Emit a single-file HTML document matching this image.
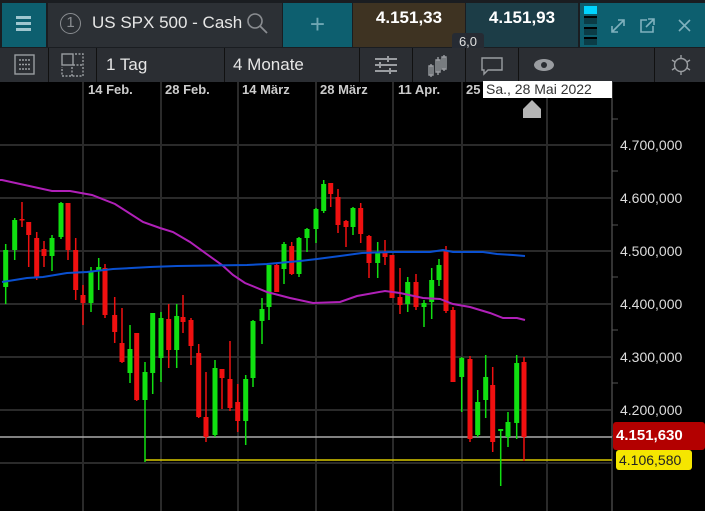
<!DOCTYPE html>
<html><head><meta charset="utf-8"><style>
*{margin:0;padding:0;box-sizing:border-box}
body{width:705px;height:511px;background:#000;overflow:hidden;font-family:"Liberation Sans",sans-serif;position:relative}
.a{position:absolute}
</style></head><body>
<div class="a" style="left:0;top:0;width:705px;height:48px;background:#1a1d21"></div>
<div class="a" style="left:2px;top:3px;width:44px;height:44px;background:#0d5f6f"></div>
<div class="a" style="left:16px;top:16px;width:15px;height:3px;background:#9fc6cf;box-shadow:0 6px 0 #9fc6cf,0 12px 0 #9fc6cf"></div>
<div class="a" style="left:48px;top:3px;width:234px;height:44px;background:#2c3035"></div>
<div class="a" style="left:60px;top:13px;width:21px;height:21px;border:1.5px solid #8a8d91;border-radius:50%;color:#8a8d91;font-size:15px;text-align:center;line-height:18px">1</div>
<div class="a" style="left:92px;top:13px;color:#e6e6e6;font-size:17px">US SPX 500 - Cash</div>
<svg class="a" style="left:246px;top:12px" width="24" height="24"><circle cx="9" cy="9" r="7" fill="none" stroke="#8a8d91" stroke-width="1.6"/><line x1="14" y1="14" x2="21" y2="21" stroke="#8a8d91" stroke-width="1.8"/></svg>
<div class="a" style="left:283px;top:3px;width:69px;height:44px;background:#0d5f6f;color:#6fa7b3;font-size:26px;text-align:center;line-height:42px;font-weight:300">+</div>
<div class="a" style="left:353px;top:3px;width:112px;height:44px;background:#3e3322;color:#fff;font-weight:bold;font-size:17px;text-align:center;line-height:30px">4.151,33</div>
<div class="a" style="left:466px;top:3px;width:112px;height:44px;background:#1c3d47;color:#fff;font-weight:bold;font-size:17px;text-align:center;line-height:30px">4.151,93</div>
<div class="a" style="left:580px;top:3px;width:125px;height:44px;background:#0d5f6f"></div>
<div class="a" style="left:584px;top:6px;width:13px;height:8px;background:#00d4ff"></div>
<div class="a" style="left:584px;top:16px;width:13px;height:8px;background:#0b3c46;border-top:2px solid #000"></div>
<div class="a" style="left:584px;top:27px;width:13px;height:8px;background:#0b3c46;border-top:2px solid #000"></div>
<div class="a" style="left:584px;top:37px;width:13px;height:8px;background:#0b3c46;border-top:2px solid #000"></div>
<svg class="a" style="left:610px;top:15px" width="90" height="20" fill="none" stroke="#7fb1bd" stroke-width="1.6"><path d="M2 17L14 5M8 5h6v6M2 11v6h6"/><path d="M37 5h-6v12h12v-6M38 4h6v6M44 4l-8 8"/><path d="M69 5l11 11M80 5L69 16"/></svg>
<div class="a" style="left:452px;top:33px;width:32px;height:16px;background:#262b33;border-radius:3px 3px 0 0;color:#e0e0e0;font-size:13px;text-align:center;line-height:17px">6,0</div>
<div class="a" style="left:0;top:48px;width:705px;height:34px;background:#2b2e33"></div>
<div class="a" style="left:48px;top:48px;width:1px;height:34px;background:#111"></div>
<div class="a" style="left:96px;top:48px;width:1px;height:34px;background:#111"></div>
<div class="a" style="left:224px;top:48px;width:1px;height:34px;background:#111"></div>
<div class="a" style="left:359px;top:48px;width:1px;height:34px;background:#111"></div>
<div class="a" style="left:412px;top:48px;width:1px;height:34px;background:#111"></div>
<div class="a" style="left:465px;top:48px;width:1px;height:34px;background:#111"></div>
<div class="a" style="left:518px;top:48px;width:1px;height:34px;background:#111"></div>
<div class="a" style="left:654px;top:48px;width:1px;height:34px;background:#111"></div>
<div class="a" style="left:106px;top:55px;color:#e6e6e6;font-size:17px">1 Tag</div>
<div class="a" style="left:233px;top:55px;color:#e6e6e6;font-size:17px">4 Monate</div>
<svg class="a" style="left:0;top:48px" width="705" height="34" fill="none" stroke="#9a9da1" stroke-width="1.4">
<rect x="15" y="7" width="19" height="19"/><path d="M19 12h11M19 16.5h11M19 21h11" stroke-dasharray="2 1"/>
<rect x="62" y="6" width="11" height="11"/><path d="M75 6h8v22h-21v-9M73 17h10M72 19v9" stroke-dasharray="2 1.5"/>
<path d="M375 11h22M375 17h22M375 23h22" stroke-width="2"/><path d="M388 8v6M380 14v6M390 20v6" stroke-width="2"/>
<path d="M429 18h4v9h-4zM436 12h4v12h-4zM442 9h4v12h-4zM431 16v13M438 9v18M444 7v16"/>
<path d="M482 10h20v12h-14l-4 4v-4h-2z"/>
<ellipse cx="544" cy="17" rx="10" ry="6" fill="#9a9da1" stroke="none"/><circle cx="544" cy="17" r="3" fill="#2b2e33" stroke="none"/>
<circle cx="681" cy="17" r="6.5"/><path d="M681 7v4M681 23v4M672 12l3 2M690 12l-3 2M672 22l3-2M690 22l-3-2"/>
</svg>
<div class="a" style="left:0;top:82px;width:705px;height:16px;background:#000"></div>
<div class="a" style="top:82px;left:88px;color:#ccc;font-size:13px;font-weight:bold">14 Feb.</div>
<div class="a" style="top:82px;left:165px;color:#ccc;font-size:13px;font-weight:bold">28 Feb.</div>
<div class="a" style="top:82px;left:242px;color:#ccc;font-size:13px;font-weight:bold">14 März</div>
<div class="a" style="top:82px;left:320px;color:#ccc;font-size:13px;font-weight:bold">28 März</div>
<div class="a" style="top:82px;left:398px;color:#ccc;font-size:13px;font-weight:bold">11 Apr.</div>
<div class="a" style="top:82px;left:466px;color:#ccc;font-size:13px;font-weight:bold">25</div>
<svg class="a" style="left:0;top:82px" width="705" height="429">
<g stroke="#2a2a2a" stroke-width="2"><path d="M83 0V429M161 0V429M238 0V429M316 0V429M393 0V429M462 0V429M547 0V429"/>
<path d="M0 63H612M0 116H612M0 169H612M0 222H612M0 275H612M0 328H612M0 381H612"/></g>
<path d="M612 0V429" stroke="#333" stroke-width="2"/>
<g stroke="#555" stroke-width="1"><path d="M612 37h6M612 89h6M612 143h6M612 195h6M612 248h6M612 301h6M612 354h6"/></g>
<path d="M523 27l9-9 9 9v9h-18z" fill="#b5b5b5"/>
</svg>
<div class="a" style="left:483px;top:81px;width:129px;height:17px;background:#fff;color:#333;font-size:14px;line-height:17px;padding-left:3px">Sa., 28 Mai 2022</div>
<svg class="a" style="left:0;top:0" width="612" height="511">
<path d="M0 437H612" stroke="#aaa" stroke-width="1.5"/>
<path d="M145 460H612" stroke="#d8c800" stroke-width="1.5"/>
<g id="c"></g>
<polyline fill="none" stroke="#b020b8" stroke-width="2" points="0,180 2,180 52,191 70,191 92,195 115,204 143,222 160,228 173,232 190,242 208,255 222,265 233,275 245,283 267,292 290,298 313,303 340,302 357,296 385,291 400,293 423,298 440,299 453,304 470,307 490,313 503,318 517,318 525,320"/>
<polyline fill="none" stroke="#0a50d0" stroke-width="2" points="2,282 27,278 43,277 67,273 87,272 113,269 150,267 177,266 247,265 267,264 300,261 317,259 340,256 362,253 390,252 430,252 443,250 453,252 483,252 497,254 513,255 525,256"/>
</svg>
<script>
var d=[[5.7,244,304,250,287,1],[14.7,218,260,220,250,1],[22,202,227,219,220,0],[28.7,222,267,222,235,0],[36.7,232,280,238,277,0],[44,241,267,249,256,0],[52,235,271,238,256,1],[61,202,239,203,237,1],[68,203,260,203,250,0],[75.7,238,300,250,290,0],[83,285,325,295,303,0],[91,267,312,272,303,1],[98.7,258,290,267,270,1],[105,264,318,268,315,0],[114.7,297,343,315,332,0],[122,308,363,343,362,0],[130,325,383,349,373,1],[136.7,333,401,333,400,0],[145,362,462,372,400,1],[152.7,313,394,313,373,1],[161,312,382,318,358,1],[168.7,304,368,319,350,0],[176.7,304,368,316,350,1],[183,295,333,317,322,0],[191,318,365,320,346,0],[198.7,344,418,353,417,0],[206,372,442,417,437,0],[215,360,437,368,435,1],[222,369,409,369,378,0],[230,341,411,379,408,0],[237.7,384,432,402,421,0],[245.7,375,445,379,421,1],[253,320,387,321,378,1],[262,298,344,309,321,1],[269,265,320,265,307,1],[276.7,263,292,265,292,0],[284,242,284,244,269,1],[291.7,242,275,246,274,0],[299,237,277,238,274,1],[307,228,252,229,238,1],[316,208,243,209,229,1],[323.7,180,213,184,211,1],[330.7,183,207,183,194,0],[338,189,233,197,225,0],[346,220,247,221,227,0],[353,207,235,208,227,1],[360.7,203,243,208,234,0],[369,235,278,236,263,0],[377.7,242,278,252,263,1],[385,240,265,252,257,0],[392,255,298,255,298,0],[400,268,314,297,305,0],[407.7,277,312,282,304,1],[416,274,310,282,307,0],[424,300,327,303,307,1],[431.7,268,319,280,302,1],[439,259,286,265,280,1],[446,246,313,250,311,0],[453,307,382,310,382,0],[461.7,357,412,358,377,1],[470,356,442,359,439,0],[477.7,390,437,402,435,1],[485.7,355,418,377,400,1],[492.7,367,452,385,442,0],[500.7,429,486,429,431,1],[508,412,447,422,437,1],[516.7,355,439,363,423,1],[524,357,461,362,437,0]];
var s="";d.forEach(function(c){var col=c[5]?"#11e011":"#f01010";s+='<rect x="'+(c[0]-0.75)+'" y="'+c[1]+'" width="1.5" height="'+(c[2]-c[1])+'" fill="'+col+'"/><rect x="'+(c[0]-2.5)+'" y="'+c[3]+'" width="5" height="'+Math.max(1.5,c[4]-c[3])+'" fill="'+col+'"/>';});
document.getElementById("c").innerHTML=s;
</script>
<div class="a" style="left:620px;top:137px;color:#ddd;font-size:14px">4.700,000</div>
<div class="a" style="left:620px;top:190px;color:#ddd;font-size:14px">4.600,000</div>
<div class="a" style="left:620px;top:243px;color:#ddd;font-size:14px">4.500,000</div>
<div class="a" style="left:620px;top:296px;color:#ddd;font-size:14px">4.400,000</div>
<div class="a" style="left:620px;top:349px;color:#ddd;font-size:14px">4.300,000</div>
<div class="a" style="left:620px;top:402px;color:#ddd;font-size:14px">4.200,000</div>
<div class="a" style="left:613px;top:422px;width:92px;height:28px;background:#b30000;border-radius:3px;color:#fff;font-weight:bold;font-size:15px;line-height:27px;padding-left:3px">4.151,630</div>
<div class="a" style="left:616px;top:450px;width:76px;height:20px;background:#f5e600;border-radius:3px;color:#222;font-size:14px;line-height:20px;padding-left:3px">4.106,580</div>
</body></html>
